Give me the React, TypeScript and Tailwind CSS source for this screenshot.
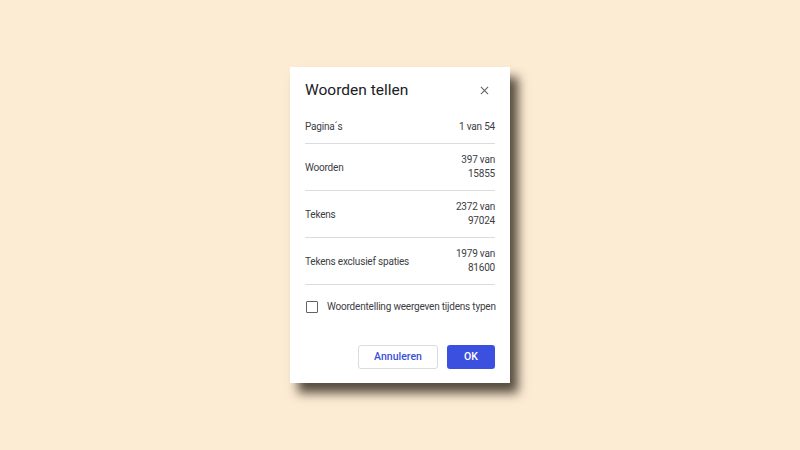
import React from "react";

function Row({ label, lines }: { label: string; lines: string[] }) {
  return (
    <div className="flex items-center justify-between border-b border-[#dadce0] py-[9px]">
      <span>{label}</span>
      <div className="flex flex-col items-end leading-[14px]">
        {lines.map((l, i) => (
          <span key={i}>{l}</span>
        ))}
      </div>
    </div>
  );
}

export default function App() {
  return (
    <div
      className="flex h-[450px] w-[800px] items-center justify-center bg-[#fdecd4]"
      style={{ fontFamily: "Roboto, 'Liberation Sans', sans-serif" }}
    >
      <div className="flex h-[316px] w-[220px] flex-col bg-white px-[15px] pb-[14px] text-[10px] tracking-[-0.2px] text-[#3c4043] shadow-[8px_10px_10px_rgba(30,22,12,0.75)]">
        <div className="flex items-center justify-between pt-[13px] tracking-normal">
          <span className="text-[15.5px] leading-[20px] text-[#202124]">Woorden tellen</span>
          <svg width="9" height="9" viewBox="0 0 10 10" className="mr-[6px]">
            <path d="M1 1L9 9M9 1L1 9" stroke="#5f6368" strokeWidth="1.2" />
          </svg>
        </div>
        <div className="mt-[10px] flex flex-col">
          <Row label="Pagina´s" lines={["1 van 54"]} />
          <Row label="Woorden" lines={["397 van", "15855"]} />
          <Row label="Tekens" lines={["2372 van", "97024"]} />
          <Row label="Tekens exclusief spaties" lines={["1979 van", "81600"]} />
        </div>
        <div className="mt-[14px] flex items-center gap-[9px]">
          <div className="ml-[1px] h-[12px] w-[12px] shrink-0 rounded-[1px] border-[1.5px] border-[#5f6368]" />
          <span className="whitespace-nowrap text-[#3c4043]">Woordentelling weergeven tijdens typen</span>
        </div>
        <div className="mt-auto flex justify-end gap-[9px] tracking-normal">
          <button className="h-[24px] w-[80px] rounded-[3px] border border-[#dadce0] bg-white text-[10.5px] font-medium text-[#3b4fd8]">
            Annuleren
          </button>
          <button className="h-[24px] w-[48px] rounded-[3px] bg-[#3c50e0] text-[10.5px] font-medium text-white">
            OK
          </button>
        </div>
      </div>
    </div>
  );
}
